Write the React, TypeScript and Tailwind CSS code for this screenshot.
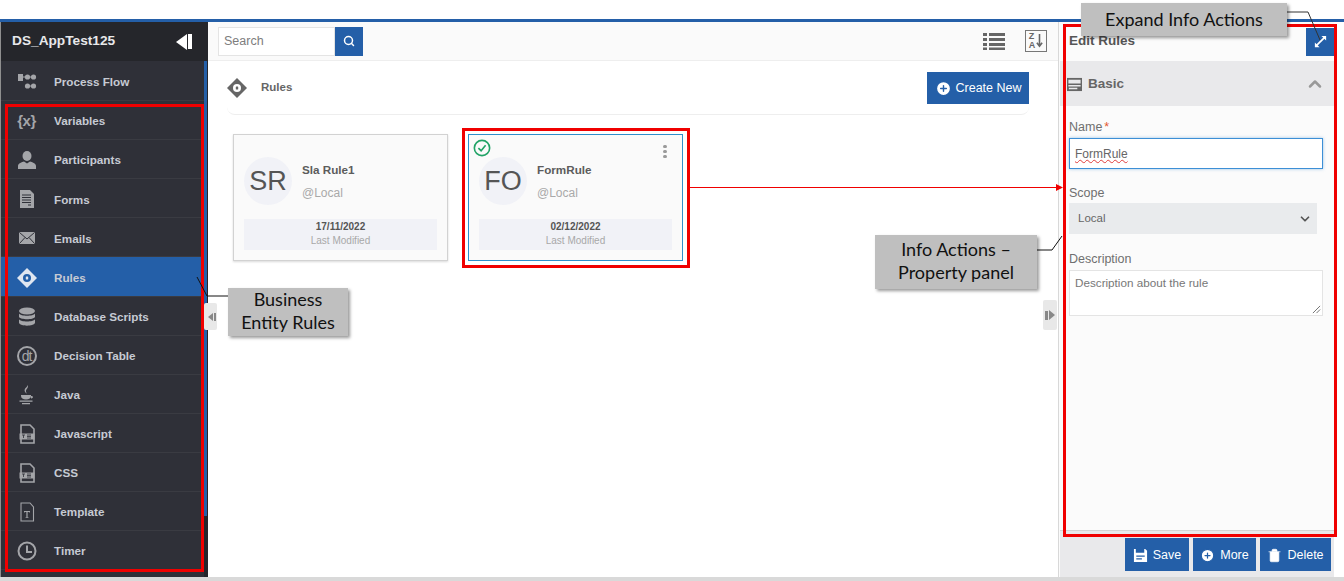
import { ChevronDown, ChevronUp, CirclePlus, Search, Trash2 } from "lucide-react";
import type { ReactNode } from "react";

const ic = "w-5 h-5 fill-[#a4a5a9]";

function Svg({ children, className = ic }: { children: ReactNode; className?: string }) {
  return (
    <svg viewBox="0 0 20 20" className={className}>
      {children}
    </svg>
  );
}

const RuleIcon = ({ className, hole }: { className: string; hole: string }) => (
  <svg viewBox="0 0 20 20" className={className}>
    <path d="M10 0 20 10 10 20 0 10Z" />
    <circle cx="10" cy="10" r="4" fill={hole} />
    <rect x="8.8" y="8.4" width="2.4" height="3.2" rx=".6" />
  </svg>
);

const FileTag = () => (
  <Svg>
    <path d="M4 1h9l4 4v14H4Z" fill="none" stroke="#a4a5a9" strokeWidth="1.600" />
    <path d="M2.500 9.500h15v6h-15Z" />
    <path d="M5 11h3M6.500 11v3M10 11h4M10 12.500h4M10 14h4" stroke="#2f3038" strokeWidth=".8" />
  </Svg>
);

const navItems: { label: string; icon: ReactNode; active?: boolean }[] = [
  {
    label: "Process Flow",
    icon: (
      <Svg>
        <rect x="1" y="2" width="5" height="7" />
        <circle cx="10.5" cy="5" r="2.6" />
        <circle cx="16.5" cy="5" r="2.6" />
        <circle cx="10.5" cy="14" r="2.6" />
        <circle cx="16.5" cy="14" r="2.6" />
        <path d="M6 4.500h10v1H6ZM10 13.500h6v1h-6Z" />
      </Svg>
    ),
  },
  {
    label: "Variables",
    icon: <span className="text-[15px] font-bold text-[#a4a5a9] tracking-[-0.5px]">{"{x}"}</span>,
  },
  {
    label: "Participants",
    icon: (
      <Svg>
        <ellipse cx="10" cy="6" rx="4.500" ry="5" />
        <path d="M1 19v-3c0-2.500 4-4 6-4.500l3 2 3-2c2 .5 6 2 6 4.500v3Z" />
      </Svg>
    ),
  },
  {
    label: "Forms",
    icon: (
      <Svg>
        <path d="M3 1h10l4 4v14H3Z" />
        <path d="M5 6h9M5 8.500h9M5 11h9M5 13.500h9M11 16h3" stroke="#2f3038" strokeWidth="1" />
      </Svg>
    ),
  },
  {
    label: "Emails",
    icon: (
      <Svg>
        <rect x="2" y="4" width="16" height="12" rx="1" />
        <path d="M2.500 4.500 10 11l7.500-6.500M2.500 15.500 8 9.500M17.500 15.500 12 9.500" fill="none" stroke="#2f3038" strokeWidth="1" />
      </Svg>
    ),
  },
  { label: "Rules", active: true, icon: <RuleIcon className="w-5 h-5 fill-[#dfe6f0]" hole="#245fa8" /> },
  {
    label: "Database Scripts",
    icon: (
      <Svg>
        <ellipse cx="10" cy="4" rx="8" ry="3.500" />
        <path d="M2 6.500c1.500 3 14.500 3 16 0V10c-1.500 3-14.500 3-16 0ZM2 12.200c1.500 3 14.500 3 16 0V16c-1.500 3.500-14.500 3.500-16 0Z" />
      </Svg>
    ),
  },
  {
    label: "Decision Table",
    icon: (
      <span className="flex items-center justify-center w-5 h-5 rounded-full border-2 border-[#a4a5a9] text-[14px] leading-none text-[#a4a5a9] tracking-[-1px]">
        dt
      </span>
    ),
  },
  {
    label: "Java",
    icon: (
      <Svg>
        <path d="M10.500 0c1.800 2.800-2.200 4-1.500 6.800.2.800.6 1.400.9 2-2.400-1.500-2.700-3.500-2-4.800C8.600 2.800 10.500 1.800 10.500 0Z" />
        <path d="M4 10h10v.8c0 2.500-2 3.700-5 3.700s-5-1.200-5-3.700ZM14 11c2.400 0 2.800 1.700 0 2.800M2.500 15.500h13v1.200h-13ZM5 18h8v1.200H5Z" />
      </Svg>
    ),
  },
  { label: "Javascript", icon: <FileTag /> },
  { label: "CSS", icon: <FileTag /> },
  {
    label: "Template",
    icon: (
      <Svg>
        <path d="M4 1h9l3.500 4v14H4Z" fill="none" stroke="#a4a5a9" strokeWidth="1.100" />
        <path d="M7 9h6v1.500h-.8V10H10.600v5.500h1V16H8.400v-.5h1V10H7.800v.5H7Z" />
      </Svg>
    ),
  },
  {
    label: "Timer",
    icon: (
      <Svg>
        <circle cx="10" cy="10" r="8.500" fill="none" stroke="#a4a5a9" strokeWidth="2" />
        <path d="M10 4.500V11h5" fill="none" stroke="#a4a5a9" strokeWidth="2" />
      </Svg>
    ),
  },
];

function Sidebar() {
  return (
    <aside className="w-[208px] shrink-0 flex flex-col bg-[#25262b] border-l border-[#8f8f8f]">
      <div className="h-[39px] flex items-center justify-between pl-[11px] pr-[16px]">
        <span className="text-[13.700px] font-bold text-[#e8e8ea]">DS_AppTest125</span>
        <span className="flex items-center gap-px">
          <span className="w-0 h-0 border-y-[8px] border-y-transparent border-r-[11px] border-r-white" />
          <span className="w-[4px] h-[15px] bg-white" />
        </span>
      </div>
      <div className="flex flex-1">
        <nav className="w-[203px] pt-px bg-[#2f3038]">
          {navItems.map((n) => (
            <div
              key={n.label}
              className={`h-[39.100px] pt-[2px] flex items-center border-b border-[#3a3b42] ${n.active ? "bg-[#245fa8]" : "bg-[#2f3038]"}`}
            >
              <span className="w-[48px] pl-[3px] flex justify-center shrink-0">{n.icon}</span>
              <span className="ml-[5px] text-[11.700px] font-bold text-[#c6cad3]">{n.label}</span>
            </div>
          ))}
        </nav>
        <div className="w-[3px] h-[455px] bg-[#245fa8]" />
      </div>
    </aside>
  );
}

function RuleCard({ initials, name, date, selected }: { initials: string; name: string; date: string; selected?: boolean }) {
  return (
    <div
      className={`relative w-[215px] h-[127px] bg-[#fafafa] px-[10px] pt-[22px] ${
        selected ? "border border-[#2f8fcb]" : "border border-[#d2d2d2] shadow-[0_1px_2px_rgba(0,0,0,0.15)]"
      }`}
    >
      {selected && (
        <>
          <svg viewBox="0 0 20 20" className="absolute left-[4px] top-[4px] w-[18px] h-[18px]">
            <circle cx="10" cy="10" r="8.500" fill="none" stroke="#21a366" strokeWidth="1.800" />
            <path d="M6 10.200 9 13l5-6" fill="none" stroke="#21a366" strokeWidth="1.800" />
          </svg>
          <span className="absolute right-[15px] top-[10px] flex flex-col gap-[2px]">
            <span className="w-[4px] h-[3px] rounded-full bg-[#9a9a9a]" />
            <span className="w-[4px] h-[3px] rounded-full bg-[#9a9a9a]" />
            <span className="w-[4px] h-[3px] rounded-full bg-[#9a9a9a]" />
          </span>
        </>
      )}
      <div className="flex h-[48px]">
        <div className="w-[48px] h-[48px] rounded-full bg-[#f1f2f7] flex items-center justify-center text-[27px] text-[#555]">
          {initials}
        </div>
        <div className="ml-[10px] pt-[6px]">
          <div className="text-[11.700px] leading-[14px] font-bold text-[#5c5c5c]">{name}</div>
          <div className="mt-[9px] text-[12px] leading-[14px] text-[#a9a9a9]">@Local</div>
        </div>
      </div>
      <div className="mt-[14px] h-[31px] bg-[#f1f2f7] flex flex-col items-center pt-px">
        <span className="text-[10px] leading-[13px] font-bold text-[#555]">{date}</span>
        <span className="text-[10px] leading-[15px] text-[#a8a8a8]">Last Modified</span>
      </div>
    </div>
  );
}

function Main() {
  return (
    <main className="relative flex-1 min-w-0 flex flex-col bg-white">
      <div className="h-[39px] bg-[#fafafa] border-b border-[#eeeeee] flex items-center pl-[10px] pr-[10px]">
        <div className="w-[117px] h-[29px] bg-white border border-[#e4e4e4] flex items-center pl-[5px] text-[12.500px] text-[#7d7d7d]">Search</div>
        <div className="w-[28px] h-[29px] bg-[#245fa8] flex items-center justify-center">
          <Search className="w-[12px] h-[12px] text-white" strokeWidth={3} />
        </div>
        <svg viewBox="0 0 22 18" className="ml-auto w-[22px] h-[18px] fill-[#666]">
          <path d="M0 1h4v3H0ZM6 1h16v3H6ZM0 6h4v3H0ZM6 6h16v3H6ZM0 11h4v3H0ZM6 11h16v3H6ZM0 15.500h4V18H0ZM6 15.500h16V18H6Z" />
        </svg>
        <div className="ml-[20px] mr-[1px] w-[22px] h-[22px] border border-[#777] flex items-center justify-center gap-px">
          <span className="flex flex-col text-[9px] leading-[9px] font-bold text-[#666]">
            <span>Z</span>
            <span>A</span>
          </span>
          <svg viewBox="0 0 8 16" className="w-[7px] h-[14px]">
            <path d="M4 0v14M1 10l3 4 3-4" fill="none" stroke="#666" strokeWidth="1.800" />
          </svg>
        </div>
      </div>

      <div className="ml-[19px] mr-[29px] h-[53px] mt-px flex items-center justify-between border-b border-[#eeeeee] rounded-b-lg">
        <div className="flex items-center">
          <RuleIcon className="w-5 h-5 fill-[#666]" hole="#ffffff" />
          <span className="ml-[14px] text-[11.500px] font-bold text-[#666]">Rules</span>
        </div>
        <button className="w-[102px] h-[32px] bg-[#245fa8] flex items-center justify-center gap-[4px] pt-px text-[12.500px] text-white">
          <CirclePlus className="w-[17px] h-[17px] fill-white text-[#245fa8]" />
          Create New
        </button>
      </div>

      <div className="flex gap-[20px] pl-[25px] pt-[19px]">
        <RuleCard initials="SR" name="Sla Rule1" date="17/11/2022" />
        <RuleCard initials="FO" name="FormRule" date="02/12/2022" selected />
      </div>

      <div className="absolute left-[-4px] top-[281px] w-[13px] h-[27px] bg-[#e8e8e8] rounded-[2px] flex items-center justify-end pr-[1px] gap-px">
        <span className="w-0 h-0 border-y-[4px] border-y-transparent border-r-[5px] border-r-[#888]" />
        <span className="w-[2px] h-[8px] bg-[#888]" />
      </div>
      <div className="absolute right-[1px] top-[278px] w-[14px] h-[30px] bg-[#e8e8e8] rounded-[2px] flex items-center justify-center gap-px">
        <span className="w-[3px] h-[9px] bg-[#888]" />
        <span className="w-0 h-0 border-y-[5px] border-y-transparent border-l-[6px] border-l-[#888]" />
      </div>
    </main>
  );
}

function FootButton({ icon, label, w }: { icon: ReactNode; label: string; w: string }) {
  return (
    <button className={`${w} h-[33px] pt-px bg-[#245fa8] flex items-center justify-center gap-[5px] text-[12.500px] text-white`}>
      {icon}
      {label}
    </button>
  );
}

function Panel() {
  const label = "block text-[12.500px] leading-[14px] text-[#6f6f6f]";
  return (
    <section className="w-[276px] shrink-0 mr-[10px] border-l border-[#d8d8d8] bg-[#fbfbfb] flex flex-col pl-px">
      <div className="h-[39px] flex items-center justify-between pl-[9px]">
        <span className="text-[13.500px] font-bold text-[#555]">Edit Rules</span>
        <span className="w-[28px] h-[28px] bg-[#245fa8] flex items-center justify-center">
          <svg viewBox="0 0 16 16" className="w-[15px] h-[15px]">
            <path d="M3 13 13 3" stroke="#fff" strokeWidth="1.800" />
            <path d="M9 2h5v5ZM2 9v5h5Z" fill="#fff" />
          </svg>
        </span>
      </div>
      <div className="h-[45px] pt-px bg-[#e9e9eb] flex items-center justify-between pl-[7px] pr-[9px]">
        <span className="flex items-center gap-[6px] text-[13.500px] font-bold text-[#666]">
          <svg viewBox="0 0 16 16" className="w-[15px] h-[15px] fill-[#666]">
            <path d="M0 1h16v14H0Z" />
            <path d="M1.500 3h13v4h-13ZM1.500 8.500h13V10h-13ZM2 11.500h9V13H2Z" fill="#e9e9eb" />
          </svg>
          Basic
        </span>
        <ChevronUp className="w-[20px] h-[20px] text-[#999]" strokeWidth={3} />
      </div>
      <div className="flex-1 px-[9px] pt-[14px]">
        <span className={label}>
          Name<span className="ml-[2px] text-[#e4572e]">*</span>
        </span>
        <div className="mt-[4px] w-[254px] h-[31px] bg-white border border-[#3d8fd6] shadow-[0_0_3px_rgba(61,143,214,0.5)] flex items-center pl-[5px] text-[12px] text-[#666]">
          <span className="underline decoration-wavy decoration-[#e03b3b] decoration-1">FormRule</span>
        </div>
        <span className={`${label} mt-[17px]`}>Scope</span>
        <div className="mt-[3px] w-[248px] h-[31px] pt-px bg-[#e9ebed] flex items-center justify-between pl-[9px] pr-[5px] text-[11.500px] text-[#666]">
          Local
          <ChevronDown className="w-[14px] h-[14px] text-[#555]" strokeWidth={3} />
        </div>
        <span className={`${label} mt-[18px]`}>Description</span>
        <div className="relative mt-[4px] w-[254px] h-[46px] bg-white border border-[#e4e4e4] pl-[5px] pt-[4px] text-[11.700px] leading-[16px] text-[#777]">
          Description about the rule
          <svg viewBox="0 0 10 10" className="absolute right-px bottom-px w-[9px] h-[9px]">
            <path d="M1 9 9 1M5 9 9 5" stroke="#666" strokeWidth="1" />
          </svg>
        </div>
      </div>
      <div className="h-[47px] bg-[#e9e9eb] border-t border-[#d4d4d4] flex justify-end items-start gap-[4px] pt-[7px] pr-[3px]">
        <FootButton
          w="w-[64px]"
          label="Save"
          icon={
            <svg viewBox="0 0 16 16" className="w-[15px] h-[15px] fill-white">
              <path d="M1 1h2v4h9V1h1l2 2v12H1Z" />
              <path d="M3.500 8h9v1.200h-9ZM3.500 11h6v1.200h-6Z" fill="#245fa8" />
            </svg>
          }
        />
        <FootButton w="w-[63px]" label="More" icon={<CirclePlus className="w-[15px] h-[15px] fill-white text-[#245fa8]" />} />
        <FootButton w="w-[71px]" label="Delete" icon={<Trash2 className="w-[15px] h-[15px] fill-white text-white" strokeWidth={1} />} />
      </div>
    </section>
  );
}

function Callout({ className, lines }: { className: string; lines: string[] }) {
  return (
    <div
      className={`absolute bg-[#bfbfbf] shadow-[2px_2px_3px_rgba(0,0,0,0.4)] flex flex-col items-center justify-center text-[18px] leading-[23px] text-[#111] [font-family:Lato,sans-serif] ${className}`}
    >
      {lines.map((l) => (
        <span key={l}>{l}</span>
      ))}
    </div>
  );
}

function Annotations() {
  return (
    <>
      <div className="absolute left-[5px] top-[104px] w-[199px] h-[468px] border-[3px] border-[#f00000]" />
      <div className="absolute left-[1063px] top-[24px] w-[274px] h-[513px] border-[3px] border-[#f00000]" />
      <div className="absolute left-[462px] top-[128px] w-[228px] h-[140px] border-[3px] border-[#f00000]" />
      <svg className="absolute left-0 top-0 w-[1344px] h-[581px] pointer-events-none" viewBox="0 0 1344 581">
        <path d="M690 187.500H1057" stroke="#f00000" strokeWidth="1" />
        <path d="M1056 184v7l7-3.500Z" fill="#f00000" />
        <path d="M197 277 207 296H228" fill="none" stroke="#111" strokeWidth="1" />
        <path d="M1037 250H1052L1062 236" fill="none" stroke="#111" strokeWidth="1" />
        <path d="M1287 12H1308L1320 40" fill="none" stroke="#333" strokeWidth="1" />
      </svg>
      <Callout className="left-[1081px] top-[3px] w-[206px] h-[33px]" lines={["Expand Info Actions"]} />
      <Callout className="left-[875px] top-[235px] w-[162px] h-[54px] pb-[2px]" lines={["Info Actions –", "Property panel"]} />
      <Callout className="left-[228px] top-[288px] w-[120px] h-[48px] pb-[2px]" lines={["Business", "Entity Rules"]} />
    </>
  );
}

export default function App() {
  return (
    <div className="relative w-[1344px] h-[581px] overflow-hidden bg-white [font-family:'Liberation_Sans',Arial,sans-serif]">
      <div className="h-[19px]" />
      <div className="h-[558px] border-t-[3px] border-[#245fa8] flex">
        <Sidebar />
        <Main />
        <Panel />
      </div>
      <div className="h-[4px] bg-[#d9d9d9]" />
      <Annotations />
    </div>
  );
}
